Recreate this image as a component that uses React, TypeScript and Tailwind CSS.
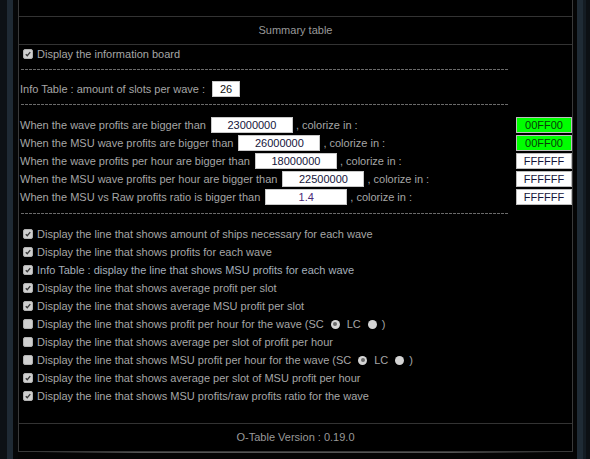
import React from 'react';

const thresholds = [
  { label: 'When the wave profits are bigger than', value: '23000000', color: '00FF00' },
  { label: 'When the MSU wave profits are bigger than', value: '26000000', color: '00FF00' },
  { label: 'When the wave profits per hour are bigger than', value: '18000000', color: 'FFFFFF' },
  { label: 'When the MSU wave profits per hour are bigger than', value: '22500000', color: 'FFFFFF' },
  { label: 'When the MSU vs Raw profits ratio is bigger than', value: '1.4', color: 'FFFFFF' },
];

const lines = [
  { text: 'Display the line that shows amount of ships necessary for each wave', checked: true },
  { text: 'Display the line that shows profits for each wave', checked: true },
  { text: 'Info Table : display the line that shows MSU profits for each wave', checked: true },
  { text: 'Display the line that shows average profit per slot', checked: true },
  { text: 'Display the line that shows average MSU profit per slot', checked: true },
  { text: 'Display the line that shows profit per hour for the wave', checked: false, radios: true },
  { text: 'Display the line that shows average per slot of profit per hour', checked: false },
  { text: 'Display the line that shows MSU profit per hour for the wave', checked: false, radios: true },
  { text: 'Display the line that shows average per slot of MSU profit per hour', checked: true },
  { text: 'Display the line that shows MSU profits/raw profits ratio for the wave', checked: true },
];

function Checkbox({ checked }: { checked: boolean }) {
  return (
    <span className="ml-[3px] mr-[4px] flex h-[10px] w-[10px] shrink-0 items-center justify-center rounded-[2px] border border-[#b0b0b0] bg-[#cfcfcf]">
      {checked && (
        <svg viewBox="0 0 10 10" className="h-[10px] w-[10px]">
          <path d="M2.2 5.2 L4.1 7.2 L7.8 2.6" fill="none" stroke="#3a3a3a" strokeWidth="1.7" />
        </svg>
      )}
    </span>
  );
}

function Radio({ checked }: { checked: boolean }) {
  return (
    <span className="mx-[7px] flex h-[9px] w-[9px] items-center justify-center rounded-full bg-[#d4d4d4]">
      {checked && <span className="h-[4px] w-[4px] rounded-full bg-[#6a6a6a]" />}
    </span>
  );
}

function Dashes() {
  return (
    <div className="ml-[1px] h-px w-[488px] bg-[repeating-linear-gradient(90deg,#6a6a6a_0_3px,transparent_3px_4px)]" />
  );
}

export default function App() {
  return (
    <div
      className="flex h-[459px] w-[590px] overflow-hidden bg-[#0b0e12] text-[11px] text-[#a6a6a6]"
      style={{ fontFamily: '"Liberation Sans", Arial, sans-serif' }}
    >
      <div className="w-[7px] bg-[#0d1115]" />
      <div className="w-[6px] bg-[#1f2a34]" />
      <div className="w-[5px] bg-[#060708]" />

      <div className="flex w-[555px] flex-col bg-[#050505]">
        <div className="flex h-[452px] flex-col border-x border-[#3a3a3a] bg-black">
          {/* previous row */}
          <div className="h-[17px] border-b border-[#333]" />

          {/* header */}
          <div className="flex h-[28px] items-center justify-center border-b border-[#333] text-[#999]">
            Summary table
          </div>

          {/* settings */}
          <div className="flex h-[379px] flex-col border-b border-[#333] pl-[1px]">
            <div className="flex h-[18px] items-center">
              <Checkbox checked />
              <span>Display the information board</span>
            </div>

            <div className="mt-[6px]">
              <Dashes />
            </div>

            <div className="mt-[10px] flex h-[18px] items-center">
              <span>Info Table : amount of slots per wave :</span>
              <span className="ml-[7px] flex h-[16px] w-[28px] items-center justify-center border border-[#c8c8c8] bg-white text-[#111]">
                26
              </span>
            </div>

            <div className="mt-[6px]">
              <Dashes />
            </div>

            <div className="mt-[11px] flex flex-col">
              {thresholds.map((t) => (
                <div key={t.label} className="flex h-[18px] items-center justify-between">
                  <div className="flex items-center">
                    <span>{t.label}</span>
                    <span
                      className={`ml-[5px] flex h-[16px] w-[82px] items-center justify-center border border-[#c8c8c8] bg-white ${
                        t.value === '1.4' ? 'text-[#4a2a78]' : 'text-[#14143a]'
                      }`}
                    >
                      {t.value}
                    </span>
                    <span className="ml-[3px]">, colorize in :</span>
                  </div>
                  <span
                    className={`flex h-[16px] w-[56px] items-center justify-center border border-[#bdbdbd] ${
                      t.color === '00FF00' ? 'bg-[#00ff00] text-[#0a3a0a]' : 'bg-white text-[#14143a]'
                    }`}
                  >
                    {t.color}
                  </span>
                </div>
              ))}
            </div>

            <div className="mt-[7px]">
              <Dashes />
            </div>

            <div className="mt-[11px] flex flex-col">
              {lines.map((l) => (
                <div key={l.text} className="flex h-[18px] items-center">
                  <Checkbox checked={l.checked} />
                  <span className={l.text.startsWith('Info') ? 'text-[#a4afbb]' : ''}>{l.text}</span>
                  {l.radios && (
                    <span className="flex items-center">
                      <span className="ml-[3px]">(SC</span>
                      <Radio checked />
                      <span>LC</span>
                      <Radio checked={false} />
                      <span className="-ml-[2px]">)</span>
                    </span>
                  )}
                </div>
              ))}
            </div>
          </div>

          {/* footer */}
          <div className="flex h-[28px] items-center justify-center border-b border-[#3a3a3a] text-[#999]">
            O-Table Version : 0.19.0
          </div>
        </div>
        <div className="mx-[18px] h-px bg-[linear-gradient(90deg,transparent,#555_20%,#555_80%,transparent)]" />
      </div>

      <div className="w-[4px] bg-[#050505]" />
      <div className="w-[6px] bg-[#1f2b35]" />
      <div className="w-[3px] bg-[#141c23]" />
      <div className="w-[4px] bg-[#0c1014]" />
    </div>
  );
}
